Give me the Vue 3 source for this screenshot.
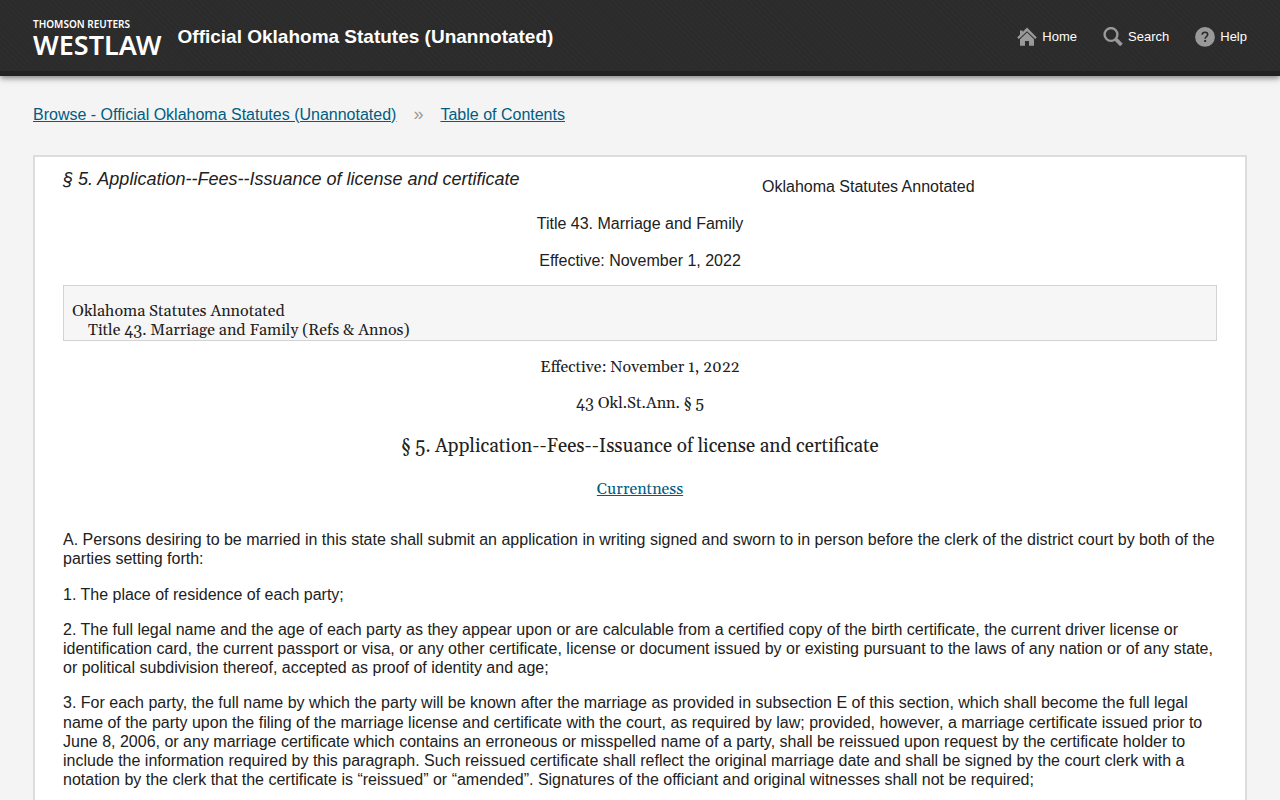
<script setup>
const intro = [
  'A. Persons desiring to be married in this state shall submit an application in writing signed and sworn to in person before the clerk of the district court by both of the parties setting forth:',
  '1. The place of residence of each party;',
  '2. The full legal name and the age of each party as they appear upon or are calculable from a certified copy of the birth certificate, the current driver license or identification card, the current passport or visa, or any other certificate, license or document issued by or existing pursuant to the laws of any nation or of any state, or political subdivision thereof, accepted as proof of identity and age;',
  '3. For each party, the full name by which the party will be known after the marriage as provided in subsection E of this section, which shall become the full legal name of the party upon the filing of the marriage license and certificate with the court, as required by law; provided, however, a marriage certificate issued prior to June 8, 2006, or any marriage certificate which contains an erroneous or misspelled name of a party, shall be reissued upon request by the certificate holder to include the information required by this paragraph. Such reissued certificate shall reflect the original marriage date and shall be signed by the court clerk with a notation by the clerk that the certificate is “reissued” or “amended”. Signatures of the officiant and original witnesses shall not be required;',
]
</script>

<template>
  <div class="page">
    <header class="bar">
      <a class="logo" href="#">
        <span class="logo-top">THOMSON REUTERS</span>
        <span class="logo-name">WESTLAW</span>
      </a>
      <h1 class="site">Official Oklahoma Statutes (Unannotated)</h1>
      <nav class="nav">
        <a href="#">
          <svg width="20" height="20" viewBox="0 0 20 20" aria-hidden="true">
            <path d="M10 .6 19.800 10.400 18.200 12 10 4.200 1.800 12 .2 10.400 3 7.600V3.500H5.600V5Z" fill="#999" />
            <path d="M10 5.500 17 12.200V18.800H12V14H8V18.800H3V12.200Z" fill="#999" />
          </svg>
          <span>Home</span>
        </a>
        <a href="#">
          <svg width="20" height="20" viewBox="0 0 20 20" aria-hidden="true">
            <circle cx="8" cy="7.500" r="6.400" fill="none" stroke="#999" stroke-width="2.400" />
            <path d="M12.600 12 18.500 18" stroke="#999" stroke-width="3.800" />
          </svg>
          <span>Search</span>
        </a>
        <a href="#">
          <svg width="20" height="20" viewBox="0 0 20 20" aria-hidden="true">
            <circle cx="10" cy="9.900" r="9.900" fill="#999" />
            <path d="M7.200 7.800C7.200 6 8.400 5.200 10 5.200S12.700 6.100 12.700 7.600C12.700 9.500 10.100 9.600 10.100 11.800" fill="none" stroke="#2b2b2b" stroke-width="1.600" />
            <path d="M9.200 13h1.900v2h-1.900z" fill="#2b2b2b" />
          </svg>
          <span>Help</span>
        </a>
      </nav>
    </header>

    <nav class="crumbs" aria-label="Breadcrumb">
      <a href="#">Browse - Official Oklahoma Statutes (Unannotated)</a>
      <span class="sep">»</span>
      <a href="#">Table of Contents</a>
    </nav>

    <main class="card">
      <h2 class="doc-title">§ 5. Application--Fees--Issuance of license and certificate</h2>
      <p class="meta">Oklahoma Statutes Annotated</p>
      <p class="meta">Title 43. Marriage and Family</p>
      <p class="meta">Effective: November 1, 2022</p>

      <div class="path">
        <div>Oklahoma Statutes Annotated</div>
        <div class="child">Title 43. Marriage and Family (Refs &amp; Annos)</div>
      </div>

      <section class="cite">
        <p>Effective: November 1, 2022</p>
        <p>43 Okl.St.Ann. § 5</p>
        <h3>§ 5. Application--Fees--Issuance of license and certificate</h3>
        <p><a href="#">Currentness</a></p>
      </section>

      <section class="text">
        <p v-for="(p, i) in intro" :key="i">{{ p }}</p>
      </section>
    </main>
  </div>
</template>

<style>
body {
  background: #f4f4f4;
}
</style>

<style scoped>
.page {
  font: 16px/1.2 "Liberation Sans", Arial, sans-serif;
  color: #212121;
}
.bar {
  box-sizing: border-box;
  height: 76px;
  padding: 0 33px;
  display: flex;
  align-items: center;
  background: repeating-linear-gradient(45deg, #2b2b2b 0 2px, #2d2d2d 2px 4px);
  border-bottom: 5px solid #212121;
  box-shadow: 0 2px 6px rgba(0, 0, 0, 0.5);
  color: #fff;
}
.bar a {
  color: #fff;
  text-decoration: none;
}
.logo {
  display: flex;
  flex-direction: column;
  font-family: "Noto Sans", "Open Sans", sans-serif;
  margin-right: 16px;
  padding-top: 4px;
}
.logo-top {
  font-size: 10px;
  line-height: 14px;
  font-weight: 600;
}
.logo-name {
  font-size: 27px;
  line-height: 28px;
  font-weight: 600;
}
.site {
  margin: 4px 0 0;
  font-size: 19px;
  font-weight: 700;
}
.nav {
  margin: 3px 0 0 auto;
  display: flex;
  gap: 26px;
}
.nav a {
  display: flex;
  align-items: center;
  gap: 5px;
  font-size: 13px;
  line-height: 20px;
}
.crumbs {
  display: flex;
  align-items: center;
  padding: 29px 33px 31px;
}
a {
  color: #005c82;
}
.sep {
  width: 44px;
  text-align: center;
  color: #999;
  font-size: 18px;
  line-height: 19px;
}
.card {
  margin: 0 33px;
  padding: 11px 28px 30px;
  background: #fff;
  border: 2px solid #dcdcdc;
}
.doc-title {
  float: left;
  margin: 0;
  font-size: 18px;
  line-height: 22px;
  font-weight: 400;
  font-style: italic;
}
.meta {
  margin: 0 0 18px;
  line-height: 19px;
  text-align: center;
}
.meta:nth-of-type(1) {
  padding-top: 9px;
}
.meta:nth-of-type(3) {
  margin-bottom: 15px;
}
.path,
.cite {
  font-family: Gelasio, Georgia, "Liberation Serif", serif;
  line-height: 19px;
}
.path {
  padding: 16px 8px 0;
  background: #f6f6f6;
  border: 1px solid #d3d3d3;
}
.child {
  padding-left: 16px;
}
.cite {
  padding-top: 17px;
  text-align: center;
}
.cite p {
  margin: 0 0 17px;
}
.cite h3 {
  margin: 22px 0;
  font-size: 19px;
  line-height: 23px;
  font-weight: 400;
}
.text {
  padding-top: 14px;
}
.text p {
  margin: 0 0 16px;
}
</style>
